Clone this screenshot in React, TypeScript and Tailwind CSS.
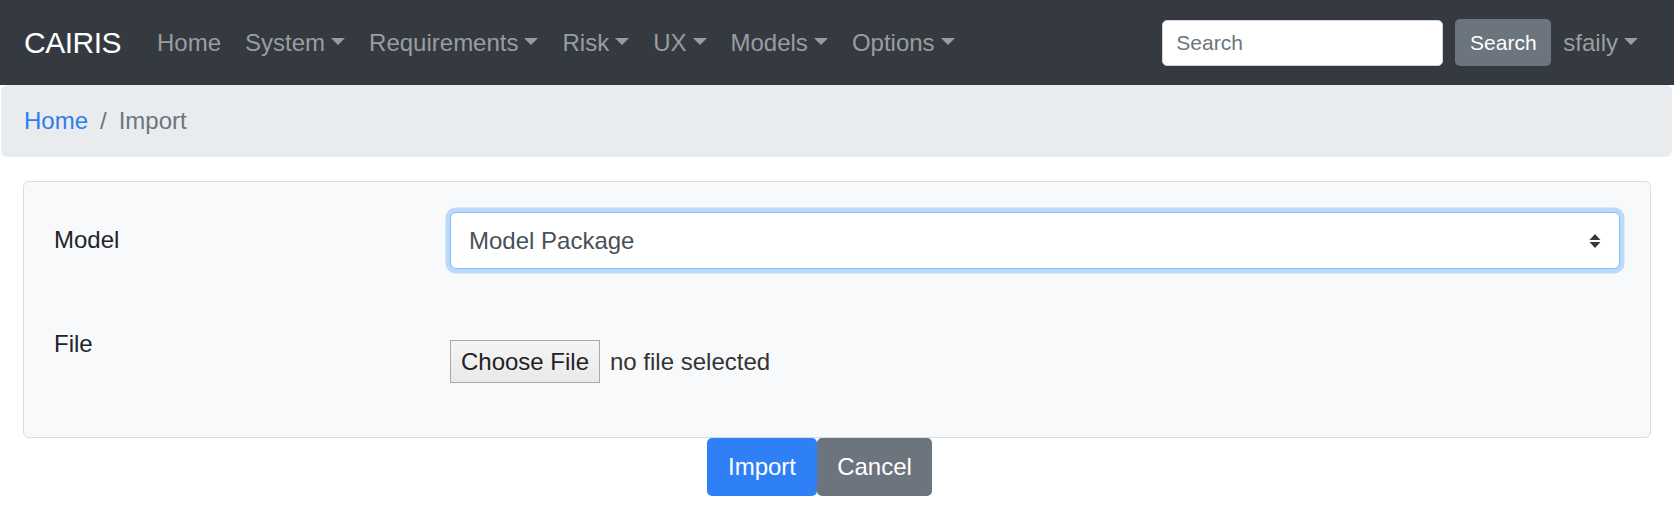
import React from 'react';

const navItems = [
    { label: 'Home', caret: false },
    { label: 'System', caret: true },
    { label: 'Requirements', caret: true },
    { label: 'Risk', caret: true },
    { label: 'UX', caret: true },
    { label: 'Models', caret: true },
    { label: 'Options', caret: true },
];

const Caret = () => (
    <span className="ml-[6px] inline-block align-[6px] border-x-[7px] border-t-[7px] border-x-transparent border-t-current border-b-0" />
);

const SelectArrows = () => (
    <svg width="12" height="14" viewBox="0 0 12 14" className="shrink-0">
        <path d="M6 0 L11.5 6 L0.5 6 Z" fill="#343a40" />
        <path d="M0.5 8 L11.5 8 L6 14 Z" fill="#343a40" />
    </svg>
);

const App = () => {
    return (
        <div className="min-h-screen bg-white text-[24px] text-[#212529] font-['Liberation_Sans',Arial,sans-serif]">
            {/* top navbar */}
            <nav className="h-[85px] bg-[#343a40] px-[24px] flex items-center">
                <span className="text-white text-[30px] leading-[45px] tracking-[-0.5px] mr-[24px]">CAIRIS</span>
                <ul className="flex items-center">
                    {navItems.map((item) => (
                        <li key={item.label} className="px-[12px] leading-[36px] text-[#9a9da0] whitespace-nowrap">
                            {item.label}
                            {item.caret && <Caret />}
                        </li>
                    ))}
                </ul>
                <div className="ml-auto flex items-center">
                    <div className="w-[281px] h-[46px] bg-white border border-[#ced4da] rounded-[5px] px-[13px] flex items-center text-[21px] text-[#6c757d]">
                        Search
                    </div>
                    <button className="ml-[12px] w-[96px] h-[47px] bg-[#6c757d] rounded-[5px] text-white text-[21px]">
                        Search
                    </button>
                    <div className="pl-[12px] pr-[12px] leading-[36px] text-[#9a9da0] whitespace-nowrap">
                        sfaily
                        <Caret />
                    </div>
                </div>
            </nav>

            {/* breadcrumb */}
            <div className="ml-[1px] mr-[2px] h-[72px] bg-[#e9ecef] rounded-[6px] px-[23px] flex items-center leading-[36px]">
                <span className="text-[#2f7de9]">Home</span>
                <span className="px-[12px] text-[#6c757d]">/</span>
                <span className="text-[#6c757d]">Import</span>
            </div>

            {/* import form */}
            <div className="mx-[23px] mt-[24px] border border-[#dadcdf] rounded-[6px] bg-[#f8f9fa] p-[30px]">
                <div className="grid grid-cols-[396px_1fr]">
                    <label className="leading-[36px] pt-[10px]">Model</label>
                    <div className="h-[57px] bg-white border-[1.5px] border-[#80bdff] rounded-[6px] shadow-[0_0_0_4.5px_rgba(0,123,255,0.25)] pl-[18px] pr-[18px] flex items-center justify-between text-[#495057]">
                        <span>Model Package</span>
                        <SelectArrows />
                    </div>
                </div>
                <div className="grid grid-cols-[396px_1fr] mt-[47px] mb-[24px]">
                    <label className="leading-[36px] pt-[10px]">File</label>
                    <div className="pt-[24px] flex items-center">
                        <span className="h-[43px] w-[150px] border-[1.5px] border-[#a9a9a9] bg-gradient-to-b from-[#f5f5f5] to-[#e9e9e9] text-[#222] flex items-center justify-center">
                            Choose File
                        </span>
                        <span className="ml-[10px] text-[#333]">no file selected</span>
                    </div>
                </div>
            </div>

            {/* actions */}
            <div className="flex pl-[707px]">
                <button className="w-[110px] h-[58px] bg-[#2f80f6] text-white rounded-[5px]">Import</button>
                <button className="w-[115px] h-[58px] bg-[#6c757d] text-white rounded-[5px]">Cancel</button>
            </div>
        </div>
    );
};

export default App;
